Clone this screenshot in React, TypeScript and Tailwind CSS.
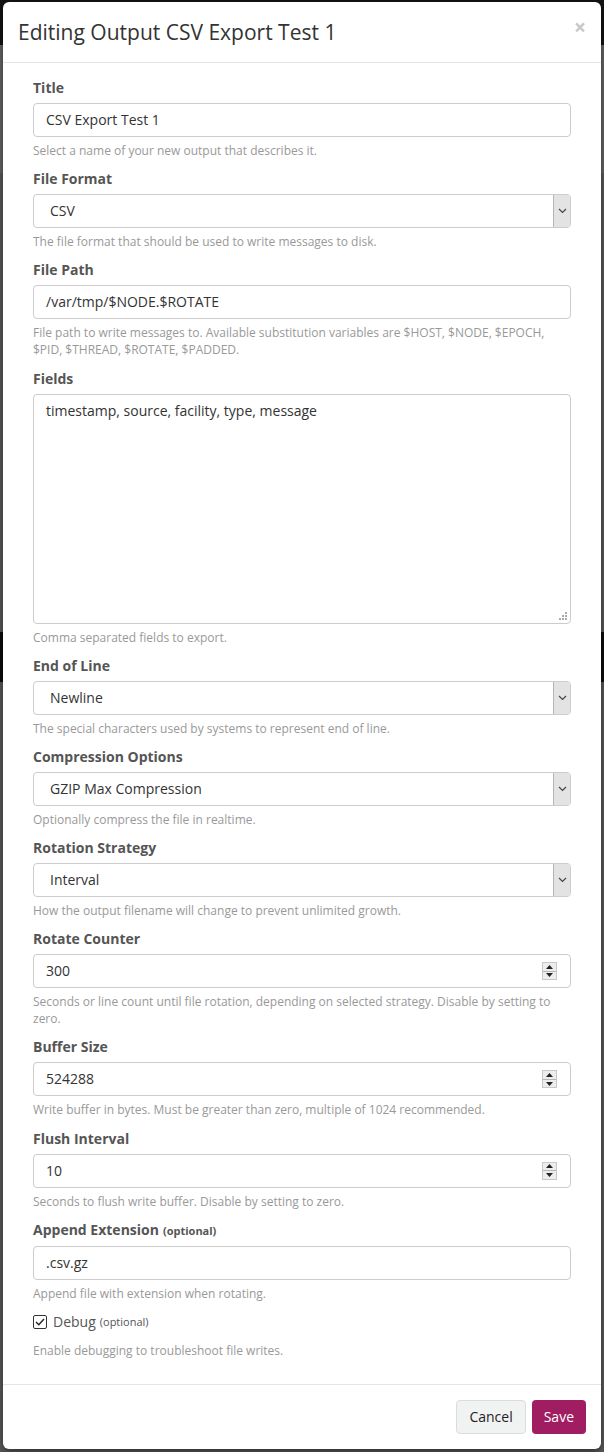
import React from 'react'

const font = { fontFamily: '"Open Sans", "Noto Sans", sans-serif' }

function Field({
  label,
  optional,
  help,
  children,
}: {
  label: string
  optional?: boolean
  help: React.ReactNode
  children: React.ReactNode
}) {
  return (
    <div className="flex flex-col">
      <label className="mb-[5px] text-sm leading-5 font-bold text-[#555]">
        {label}
        {optional && <span className="ml-1 text-[11px] font-bold text-[#555]">(optional)</span>}
      </label>
      {children}
      <p className="mt-[5px] mb-[10px] text-xs leading-[1.42857] text-[#999]">{help}</p>
    </div>
  )
}

function TextBox({ value }: { value: string }) {
  return (
    <div className="flex h-[34px] items-center rounded-[4px] border border-[#ccc] bg-white px-3 text-sm text-[#333]">
      {value}
    </div>
  )
}

function SelectBox({ value }: { value: string }) {
  return (
    <div className="flex h-[34px] items-stretch rounded-[4px] border border-[#ccc] bg-white text-sm text-[#333]">
      <div className="flex flex-1 items-center pl-4">{value}</div>
      <div className="flex w-[17px] items-center justify-center rounded-r-[3px] border-l border-[#b5b5b5] bg-[#e3e3e3]">
        <svg width="9" height="6" viewBox="0 0 9 6" fill="none">
          <path d="M1 1l3.5 3.5L8 1" stroke="#444" strokeWidth="1.2" />
        </svg>
      </div>
    </div>
  )
}

function NumberBox({ value }: { value: string }) {
  return (
    <div className="flex h-[34px] items-center justify-between rounded-[4px] border border-[#ccc] bg-white pr-[13px] pl-3 text-sm text-[#333]">
      <span>{value}</span>
      <div className="flex h-[18px] w-[15px] flex-col border border-[#c8c8c8] bg-[#ededed]">
        <div className="flex flex-1 items-center justify-center border-b border-[#b5b5b5]">
          <svg width="7" height="4" viewBox="0 0 7 4">
            <path d="M0 4L3.5 0L7 4z" fill="#222" />
          </svg>
        </div>
        <div className="flex flex-1 items-center justify-center">
          <svg width="7" height="4" viewBox="0 0 7 4">
            <path d="M0 0L3.5 4L7 0z" fill="#222" />
          </svg>
        </div>
      </div>
    </div>
  )
}

export default function App() {
  return (
    <div className="relative h-[1452px] w-[604px] overflow-hidden" style={font}>
      <div className="flex h-full flex-col bg-[#5d5d5d]">
        <div className="h-[45px] bg-[#141414]" />
        <div className="h-[128px] bg-[#666]" />
        <div className="h-[459px] bg-[#5a5a5a]" />
        <div className="h-[50px] bg-[#0c0c0c]" />
        <div className="flex-1 bg-[#5a5a5a]" />
      </div>

      <div className="absolute top-[2px] left-[3px] w-[598px] rounded-[6px] bg-white shadow-[0_3px_9px_rgba(0,0,0,0.5)]">
        <div className="flex h-[61px] items-center justify-between border-b border-[#e5e5e5] px-[15px]">
          <h4 className="text-[21px] leading-[30px] text-[#333]">Editing Output CSV Export Test 1</h4>
          <span className="mb-[10px] text-[21px] leading-none font-bold text-[#c8c8c8]">×</span>
        </div>

        <div className="px-[30px] pt-[15px] pb-[15px]">
          <Field label="Title" help="Select a name of your new output that describes it.">
            <TextBox value="CSV Export Test 1" />
          </Field>
          <Field label="File Format" help="The file format that should be used to write messages to disk.">
            <SelectBox value="CSV" />
          </Field>
          <Field
            label="File Path"
            help="File path to write messages to. Available substitution variables are $HOST, $NODE, $EPOCH, $PID, $THREAD, $ROTATE, $PADDED."
          >
            <TextBox value="/var/tmp/$NODE.$ROTATE" />
          </Field>
          <Field label="Fields" help="Comma separated fields to export.">
            <div className="relative h-[230px] rounded-[4px] border border-[#ccc] bg-white px-3 py-[6px] text-sm leading-5 text-[#333]">
              timestamp, source, facility, type, message
              <svg className="absolute right-[2px] bottom-[2px]" width="9" height="9" viewBox="0 0 9 9">
                <rect x="6" y="0" width="2" height="2" fill="#aaa" />
                <rect x="3" y="3" width="2" height="2" fill="#aaa" />
                <rect x="6" y="3" width="2" height="2" fill="#aaa" />
                <rect x="0" y="6" width="2" height="2" fill="#aaa" />
                <rect x="3" y="6" width="2" height="2" fill="#aaa" />
                <rect x="6" y="6" width="2" height="2" fill="#aaa" />
              </svg>
            </div>
          </Field>
          <Field label="End of Line" help="The special characters used by systems to represent end of line.">
            <SelectBox value="Newline" />
          </Field>
          <Field label="Compression Options" help="Optionally compress the file in realtime.">
            <SelectBox value="GZIP Max Compression" />
          </Field>
          <Field label="Rotation Strategy" help="How the output filename will change to prevent unlimited growth.">
            <SelectBox value="Interval" />
          </Field>
          <Field
            label="Rotate Counter"
            help="Seconds or line count until file rotation, depending on selected strategy. Disable by setting to zero."
          >
            <NumberBox value="300" />
          </Field>
          <Field label="Buffer Size" help="Write buffer in bytes. Must be greater than zero, multiple of 1024 recommended.">
            <NumberBox value="524288" />
          </Field>
          <Field label="Flush Interval" help="Seconds to flush write buffer. Disable by setting to zero.">
            <NumberBox value="10" />
          </Field>
          <Field label="Append Extension" optional help="Append file with extension when rotating.">
            <TextBox value=".csv.gz" />
          </Field>

          <div className="flex flex-col">
            <div className="flex h-5 items-center text-sm text-[#555]">
              <span className="flex h-[14px] w-[14px] items-center justify-center rounded-[2px] border border-[#333] bg-white">
                <svg width="10" height="8" viewBox="0 0 10 8" fill="none">
                  <path d="M1 4l2.8 2.8L9 1" stroke="#222" strokeWidth="1.4" />
                </svg>
              </span>
              <span className="ml-[6px]">Debug</span>
              <span className="ml-1 text-[11px] text-[#555]">(optional)</span>
            </div>
            <p className="mt-[10px] mb-[10px] text-xs leading-[1.42857] text-[#999]">
              Enable debugging to troubleshoot file writes.
            </p>
          </div>
        </div>

        <div className="flex justify-end gap-[6px] border-t border-[#e5e5e5] p-[15px]">
          <button
            type="button"
            className="h-[34px] rounded-[4px] border border-[#dcdcdc] bg-[#f1f2f2] px-3 text-sm text-[#1f1f1f]"
          >
            Cancel
          </button>
          <button type="button" className="h-[34px] rounded-[4px] bg-[#a01d61] px-3 text-sm text-white">
            Save
          </button>
        </div>
      </div>
    </div>
  )
}
